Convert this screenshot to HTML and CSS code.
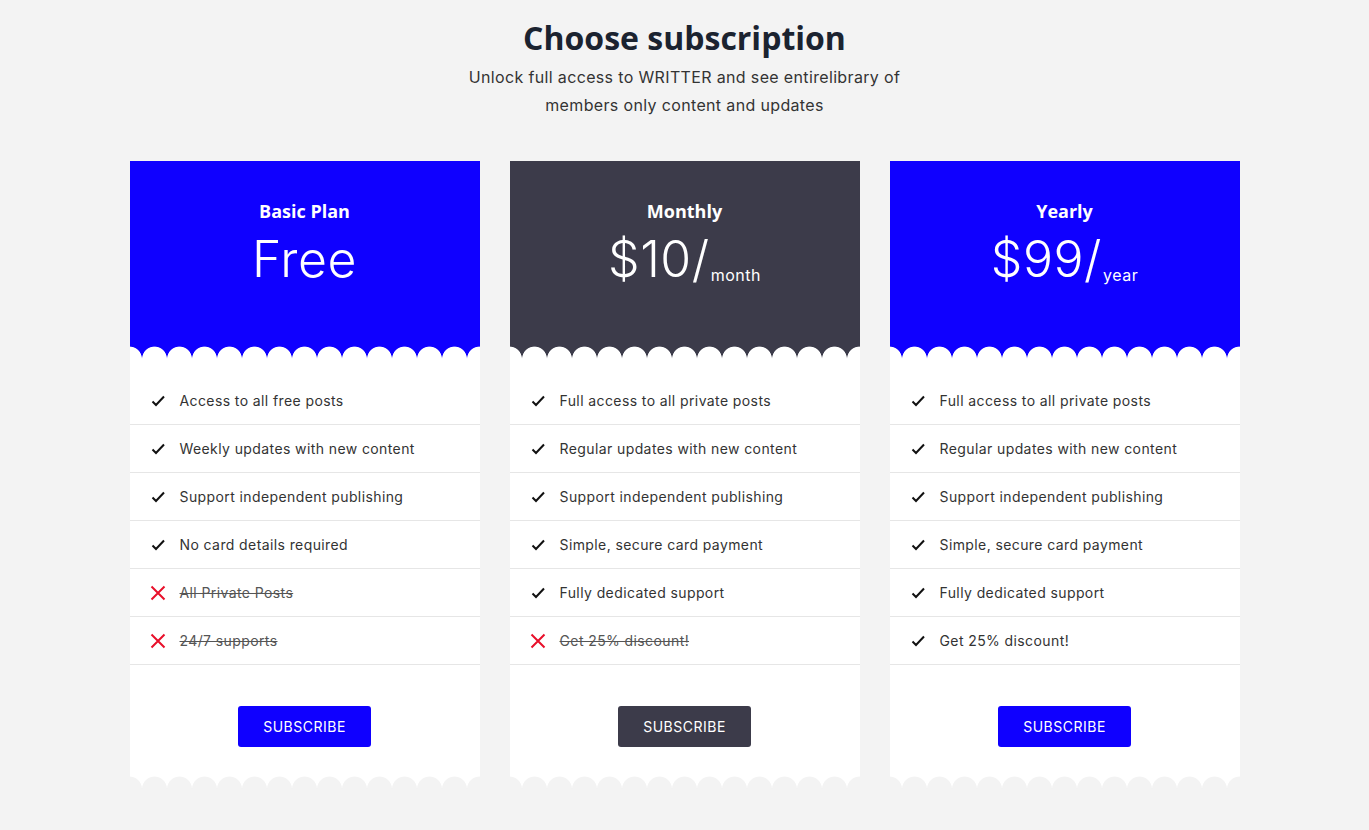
FILE: index.html
```html
<!DOCTYPE html>
<html lang="en">
<head>
<meta charset="utf-8">
<title>Choose subscription</title>
<link rel="stylesheet" href="styles.css">
</head>
<body>
<header class="intro">
  <h1 class="title">Choose subscription</h1>
  <p class="subtitle">Unlock full access to WRITTER and see entirelibrary of<br>members only content and updates</p>
</header>
<main class="plans">
  <section class="card">
    <div class="card-head blue">
      <h2 class="plan-name">Basic Plan</h2>
      <div class="price">Free</div>
    </div>
    <ul class="features">
      <li class="feature"><svg class="ico" viewBox="0 0 16 14"><path d="M2.5 7.5 L6 11 L14 2.5" fill="none" stroke="#111" stroke-width="2"/></svg><span>Access to all free posts</span></li>
      <li class="feature"><svg class="ico" viewBox="0 0 16 14"><path d="M2.5 7.5 L6 11 L14 2.5" fill="none" stroke="#111" stroke-width="2"/></svg><span>Weekly updates with new content</span></li>
      <li class="feature"><svg class="ico" viewBox="0 0 16 14"><path d="M2.5 7.5 L6 11 L14 2.5" fill="none" stroke="#111" stroke-width="2"/></svg><span>Support independent publishing</span></li>
      <li class="feature"><svg class="ico" viewBox="0 0 16 14"><path d="M2.5 7.5 L6 11 L14 2.5" fill="none" stroke="#111" stroke-width="2"/></svg><span>No card details required</span></li>
      <li class="feature off"><svg class="ico" viewBox="0 0 16 16"><path d="M1.5 1.5 L14.5 14.5 M14.5 1.5 L1.5 14.5" fill="none" stroke="#e8102a" stroke-width="2"/></svg><span>All Private Posts</span></li>
      <li class="feature off"><svg class="ico" viewBox="0 0 16 16"><path d="M1.5 1.5 L14.5 14.5 M14.5 1.5 L1.5 14.5" fill="none" stroke="#e8102a" stroke-width="2"/></svg><span>24/7 supports</span></li>
    </ul>
    <div class="card-foot"><button class="btn blue">SUBSCRIBE</button></div>
  </section>
  <section class="card">
    <div class="card-head dark">
      <h2 class="plan-name">Monthly</h2>
      <div class="price">$10/<span class="per">month</span></div>
    </div>
    <ul class="features">
      <li class="feature"><svg class="ico" viewBox="0 0 16 14"><path d="M2.5 7.5 L6 11 L14 2.5" fill="none" stroke="#111" stroke-width="2"/></svg><span>Full access to all private posts</span></li>
      <li class="feature"><svg class="ico" viewBox="0 0 16 14"><path d="M2.5 7.5 L6 11 L14 2.5" fill="none" stroke="#111" stroke-width="2"/></svg><span>Regular updates with new content</span></li>
      <li class="feature"><svg class="ico" viewBox="0 0 16 14"><path d="M2.5 7.5 L6 11 L14 2.5" fill="none" stroke="#111" stroke-width="2"/></svg><span>Support independent publishing</span></li>
      <li class="feature"><svg class="ico" viewBox="0 0 16 14"><path d="M2.5 7.5 L6 11 L14 2.5" fill="none" stroke="#111" stroke-width="2"/></svg><span>Simple, secure card payment</span></li>
      <li class="feature"><svg class="ico" viewBox="0 0 16 14"><path d="M2.5 7.5 L6 11 L14 2.5" fill="none" stroke="#111" stroke-width="2"/></svg><span>Fully dedicated support</span></li>
      <li class="feature off"><svg class="ico" viewBox="0 0 16 16"><path d="M1.5 1.5 L14.5 14.5 M14.5 1.5 L1.5 14.5" fill="none" stroke="#e8102a" stroke-width="2"/></svg><span>Get 25% discount!</span></li>
    </ul>
    <div class="card-foot"><button class="btn dark">SUBSCRIBE</button></div>
  </section>
  <section class="card">
    <div class="card-head blue">
      <h2 class="plan-name">Yearly</h2>
      <div class="price">$99/<span class="per">year</span></div>
    </div>
    <ul class="features">
      <li class="feature"><svg class="ico" viewBox="0 0 16 14"><path d="M2.5 7.5 L6 11 L14 2.5" fill="none" stroke="#111" stroke-width="2"/></svg><span>Full access to all private posts</span></li>
      <li class="feature"><svg class="ico" viewBox="0 0 16 14"><path d="M2.5 7.5 L6 11 L14 2.5" fill="none" stroke="#111" stroke-width="2"/></svg><span>Regular updates with new content</span></li>
      <li class="feature"><svg class="ico" viewBox="0 0 16 14"><path d="M2.5 7.5 L6 11 L14 2.5" fill="none" stroke="#111" stroke-width="2"/></svg><span>Support independent publishing</span></li>
      <li class="feature"><svg class="ico" viewBox="0 0 16 14"><path d="M2.5 7.5 L6 11 L14 2.5" fill="none" stroke="#111" stroke-width="2"/></svg><span>Simple, secure card payment</span></li>
      <li class="feature"><svg class="ico" viewBox="0 0 16 14"><path d="M2.5 7.5 L6 11 L14 2.5" fill="none" stroke="#111" stroke-width="2"/></svg><span>Fully dedicated support</span></li>
      <li class="feature"><svg class="ico" viewBox="0 0 16 14"><path d="M2.5 7.5 L6 11 L14 2.5" fill="none" stroke="#111" stroke-width="2"/></svg><span>Get 25% discount!</span></li>
    </ul>
    <div class="card-foot"><button class="btn blue">SUBSCRIBE</button></div>
  </section>
</main>
</body>
</html>
```

FILE: styles.css
```css
* { box-sizing: border-box; }
html, body {
  margin: 0;
  padding: 0;
  background: #f3f3f3;
}
body {
  font-family: "Inter", "Liberation Sans", sans-serif;
  color: #333;
  height: 830px;
  overflow: hidden;
}
.intro {
  text-align: center;
  padding-top: 16px;
}
.title {
  margin: 0;
  font-family: "Open Sans", sans-serif;
  font-weight: 700;
  font-size: 32px;
  line-height: 44px;
  color: #1b2330;
}
.subtitle {
  margin: 3px 0 0;
  font-size: 16px;
  line-height: 28px;
  letter-spacing: 0.35px;
  color: #333;
}
.plans {
  display: flex;
  justify-content: center;
  gap: 30px;
  margin-top: 42px;
}
.card {
  width: 350px;
  background: #fff;
  position: relative;
}
.card::after {
  content: "";
  position: absolute;
  left: 0;
  right: 0;
  bottom: 0;
  height: 13px;
  background-image: radial-gradient(circle at 12.5px 13px, #f3f3f3 12px, rgba(243,243,243,0) 12.8px);
  background-size: 25px 13px;
  background-repeat: repeat-x;
  background-position: -13px 0;
}
.card-head {
  height: 198px;
  text-align: center;
  color: #fff;
  padding-top: 38px;
  position: relative;
}
.card-head::after {
  content: "";
  position: absolute;
  left: 0;
  right: 0;
  bottom: 0;
  height: 13px;
  background-image: radial-gradient(circle at 12.5px 13px, #fff 12px, rgba(255,255,255,0) 12.8px);
  background-size: 25px 13px;
  background-repeat: repeat-x;
  background-position: -13px 0;
}
.blue { background-color: #0f00ff; }
.dark { background-color: #3c3b4a; }
.plan-name {
  margin: 0;
  font-family: "Open Sans", sans-serif;
  font-weight: 700;
  font-size: 18px;
  line-height: 24px;
}
.price {
  font-weight: 300;
  font-size: 50px;
  line-height: 56px;
  margin-top: 8px;
  letter-spacing: 0.5px;
}
.per {
  font-size: 16px;
  font-weight: 400;
  letter-spacing: 0.5px;
  margin-left: 1px;
  vertical-align: -4px;
  line-height: 1;
}
.features {
  list-style: none;
  margin: 0;
  padding: 18px 0 0;
}
.feature {
  display: flex;
  align-items: center;
  height: 48px;
  padding-left: 20px;
  gap: 14px;
  font-size: 14px;
  letter-spacing: 0.4px;
  color: #333;
  border-bottom: 1px solid #e6e6e6;
}
.ico {
  width: 16px;
  height: 16px;
  flex: none;
}
.feature.off span {
  text-decoration: line-through;
  color: #555;
}
.card-foot {
  display: flex;
  justify-content: center;
  padding: 41px 0 42px;
}
.btn {
  width: 133px;
  height: 41px;
  border: 0;
  border-radius: 3px;
  color: #fff;
  font-family: "Inter", "Liberation Sans", sans-serif;
  font-size: 14px;
  letter-spacing: 0.5px;
  cursor: pointer;
}
```
